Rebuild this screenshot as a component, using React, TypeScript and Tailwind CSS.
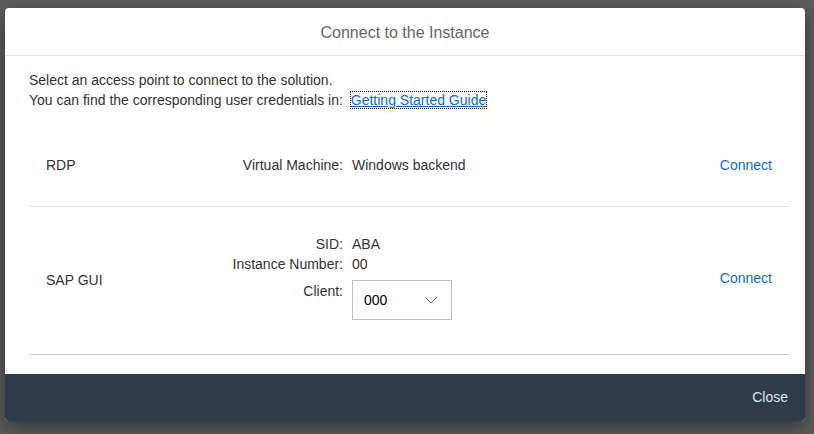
import React from 'react';

const font = { fontFamily: '"Liberation Sans", Arial, sans-serif' };

function Chevron() {
  return (
    <svg width="12" height="7" viewBox="0 0 12 7" fill="none">
      <path d="M0.5 0.5L6 6L11.5 0.5" stroke="#5b738b" strokeWidth="1" />
    </svg>
  );
}

export default function App() {
  return (
    <div
      className="w-[814px] h-[434px] bg-[#5c5c5c] pt-[8px] pl-[5px] overflow-hidden"
      style={font}
    >
      <div className="w-[800px] rounded-[4px] bg-white shadow-[0_6px_18px_rgba(0,0,0,0.45)] overflow-hidden">
        {/* Header */}
        <div className="h-[48px] border-b border-[#e5e5e5] flex items-center justify-center">
          <h1 className="text-[16px] text-[#666666] pt-[3px]">Connect to the Instance</h1>
        </div>

        {/* Body */}
        <div className="pl-[24px] pr-[16px] pt-[14px] pb-[19px] text-[14px] text-[#333333]">
          <p className="leading-[20px]">Select an access point to connect to the solution.</p>
          <p className="leading-[20px]">
            You can find the corresponding user credentials in:{' '}
            <a
              href="#"
              className="ml-[4px] text-[#0a6ed1] underline outline-1 outline-dotted outline-black"
            >
              Getting Started Guide
            </a>
          </p>

          {/* RDP row */}
          <div className="mt-[12px] h-[85px] border-b border-[#e5e5e5] flex items-center pl-[17px] pr-[17px] pt-[2px]">
            <div className="w-[150px]">RDP</div>
            <div className="w-[147px] text-right">Virtual Machine:</div>
            <div className="ml-[9px] flex-1">Windows backend</div>
            <a href="#" className="text-[#0a6ed1]">Connect</a>
          </div>

          {/* SAP GUI row */}
          <div className="pt-[27px] pb-[34px] border-b border-[#cccccc] flex items-start pl-[17px] pr-[17px] leading-[20px]">
            <div className="w-[150px] mt-[36px]">SAP GUI</div>
            <div className="flex-1 grid grid-cols-[147px_1fr] gap-x-[9px]">
              <div className="text-right">SID:</div>
              <div>ABA</div>
              <div className="text-right">Instance Number:</div>
              <div>00</div>
              <div className="text-right mt-[7px]">Client:</div>
              <div className="mt-[6px]">
                <div className="w-[100px] h-[40px] border border-[#bfbfbf] flex items-center justify-between pl-[11px] pr-[14px] text-black">
                  <span>000</span>
                  <Chevron />
                </div>
              </div>
            </div>
            <a href="#" className="text-[#0a6ed1] mt-[34px]">Connect</a>
          </div>
        </div>

        {/* Footer */}
        <div className="h-[47px] bg-[#2f3b48] flex items-center justify-end pr-[17px]">
          <button className="text-[14px] text-[#d6e4f0]">Close</button>
        </div>
      </div>
    </div>
  );
}
